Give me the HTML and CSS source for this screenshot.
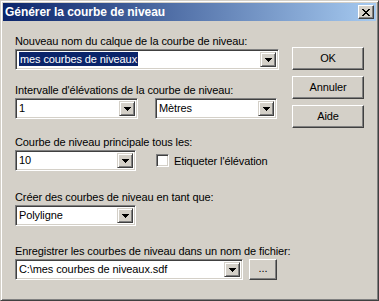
FILE: index.html
```html
<!DOCTYPE html>
<html lang="fr">
<head>
<meta charset="utf-8">
<title>Générer la courbe de niveau</title>
<link rel="stylesheet" href="styles.css">
</head>
<body>
<div class="window">
  <div class="titlebar">
    <span class="title">Générer la courbe de niveau</span>
    <div class="close">
      <svg width="8" height="7" viewBox="0 0 8 7" shape-rendering="crispEdges"><path d="M0 0h2v1H0zM6 0h2v1H6zM1 1h2v1H1zM5 1h2v1H5zM2 2h4v1H2zM3 3h2v1H3zM2 4h4v1H2zM1 5h2v1H1zM5 5h2v1H5zM0 6h2v1H0zM6 6h2v1H6z" fill="#000"/></svg>
    </div>
  </div>
  <div class="content">
    <div class="form">
      <div class="group g1">
        <div class="label">Nouveau nom du calque de la courbe de niveau:</div>
        <div class="combo c-full">
          <div class="value"><span class="sel">mes courbes de niveaux</span></div>
          <div class="drop"><svg width="7" height="4" viewBox="0 0 7 4" shape-rendering="crispEdges"><path d="M0 0h7v1H0zM1 1h5v1H1zM2 2h3v1H2zM3 3h1v1H3z" fill="#000"/></svg></div>
        </div>
      </div>
      <div class="group g2">
        <div class="label">Intervalle d'élévations de la courbe de niveau:</div>
        <div class="row r2">
          <div class="combo c-num">
            <div class="value">1</div>
            <div class="drop"><svg width="7" height="4" viewBox="0 0 7 4" shape-rendering="crispEdges"><path d="M0 0h7v1H0zM1 1h5v1H1zM2 2h3v1H2zM3 3h1v1H3z" fill="#000"/></svg></div>
          </div>
          <div class="combo c-unit">
            <div class="value">Mètres</div>
            <div class="drop"><svg width="7" height="4" viewBox="0 0 7 4" shape-rendering="crispEdges"><path d="M0 0h7v1H0zM1 1h5v1H1zM2 2h3v1H2zM3 3h1v1H3z" fill="#000"/></svg></div>
          </div>
        </div>
      </div>
      <div class="group g3">
        <div class="label">Courbe de niveau principale tous les:</div>
        <div class="row r3">
          <div class="combo c-small">
            <div class="value">10</div>
            <div class="drop"><svg width="7" height="4" viewBox="0 0 7 4" shape-rendering="crispEdges"><path d="M0 0h7v1H0zM1 1h5v1H1zM2 2h3v1H2zM3 3h1v1H3z" fill="#000"/></svg></div>
          </div>
          <div class="check"><span class="box"></span><span class="check-label">Etiqueter l'élévation</span></div>
        </div>
      </div>
      <div class="group g4">
        <div class="label">Créer des courbes de niveau en tant que:</div>
        <div class="combo c-small">
          <div class="value">Polyligne</div>
          <div class="drop"><svg width="7" height="4" viewBox="0 0 7 4" shape-rendering="crispEdges"><path d="M0 0h7v1H0zM1 1h5v1H1zM2 2h3v1H2zM3 3h1v1H3z" fill="#000"/></svg></div>
        </div>
      </div>
      <div class="group g5">
        <div class="label">Enregistrer les courbes de niveau dans un nom de fichier:</div>
        <div class="row r5">
          <div class="combo c-file">
            <div class="value">C:\mes courbes de niveaux.sdf</div>
            <div class="drop"><svg width="7" height="4" viewBox="0 0 7 4" shape-rendering="crispEdges"><path d="M0 0h7v1H0zM1 1h5v1H1zM2 2h3v1H2zM3 3h1v1H3z" fill="#000"/></svg></div>
          </div>
          <div class="btn btn-browse">...</div>
        </div>
      </div>
    </div>
    <div class="buttons">
      <div class="btn">OK</div>
      <div class="btn">Annuler</div>
      <div class="btn">Aide</div>
    </div>
  </div>
</div>
</body>
</html>
```

FILE: styles.css
```css
* { box-sizing: border-box; }
html, body { margin: 0; padding: 0; background: #d4d0c8; }
body {
  font-family: "Liberation Sans", Arial, sans-serif;
  font-size: 11px;
  letter-spacing: -0.1px;
  color: #000;
}
.window {
  width: 379px;
  height: 301px;
  background: #d4d0c8;
  border: 1px solid;
  border-color: #d4d0c8 #404040 #404040 #d4d0c8;
  box-shadow: inset 1px 1px #ffffff, inset -1px -1px #808080;
  padding: 2px;
  display: flex;
  flex-direction: column;
}
.titlebar {
  height: 18px;
  background: linear-gradient(to right, #0a246a, #a6caf0);
  display: flex;
  align-items: center;
  justify-content: space-between;
  padding: 0 2px 0 2px;
}
.title {
  color: #fff;
  font-weight: bold;
  font-size: 12px;
  letter-spacing: -0.05px;
  line-height: 18px;
}
.close {
  width: 16px;
  height: 14px;
  background: #d4d0c8;
  border: 1px solid;
  border-color: #ffffff #404040 #404040 #ffffff;
  box-shadow: inset -1px -1px #808080;
  display: flex;
  align-items: center;
  justify-content: center;
}
.close svg { display: block; margin-left: -1px; }
.content {
  display: flex;
  padding: 14px 0 0 12px;
}
.form {
  width: 264px;
  display: flex;
  flex-direction: column;
}
.label {
  height: 13px;
  line-height: 13px;
  white-space: nowrap;
  margin-bottom: 1px;
}
.g2 { margin-top: 14px; }
.g3 { margin-top: 17px; }
.g4 { margin-top: 20px; }
.g5 { margin-top: 19px; }
.row { display: flex; align-items: center; }
.combo {
  height: 21px;
  background: #fff;
  border: 1px solid;
  border-color: #808080 #ffffff #ffffff #808080;
  box-shadow: inset 1px 1px #404040, inset -1px -1px #d4d0c8;
  padding: 2px;
  display: flex;
  align-items: stretch;
}
.value {
  flex: 1;
  line-height: 15px;
  padding-left: 1px;
  white-space: nowrap;
  overflow: hidden;
}
.sel {
  background: #0a246a;
  color: #fff;
  padding: 1px;
}
.drop {
  width: 16px;
  height: 15px;
  background: #d4d0c8;
  border: 1px solid;
  border-color: #d4d0c8 #404040 #404040 #d4d0c8;
  box-shadow: inset 1px 1px #ffffff, inset -1px -1px #808080;
  display: flex;
  align-items: center;
  justify-content: center;
}
.drop svg { display: block; }
.c-full { width: 264px; }
.c-num { width: 123px; }
.c-unit { width: 122px; margin-left: 17px; }
.c-small { width: 121px; }
.c-file { width: 228px; }
.check { display: flex; align-items: center; margin-left: 20px; }
.box {
  width: 13px;
  height: 13px;
  background: #fff;
  border: 1px solid;
  border-color: #808080 #ffffff #ffffff #808080;
  box-shadow: inset 1px 1px #404040, inset -1px -1px #d4d0c8;
}
.check-label { margin-left: 5px; white-space: nowrap; }
.buttons {
  margin-left: 13px;
  margin-top: 12px;
  display: flex;
  flex-direction: column;
  gap: 6px;
}
.btn {
  width: 72px;
  height: 23px;
  background: #d4d0c8;
  border: 1px solid;
  border-color: #ffffff #404040 #404040 #ffffff;
  box-shadow: inset -1px -1px #808080;
  display: flex;
  align-items: center;
  justify-content: center;
  line-height: 13px;
}
.btn-browse {
  width: 28px;
  height: 21px;
  margin-left: 6px;
  padding-bottom: 2px;
}
```
